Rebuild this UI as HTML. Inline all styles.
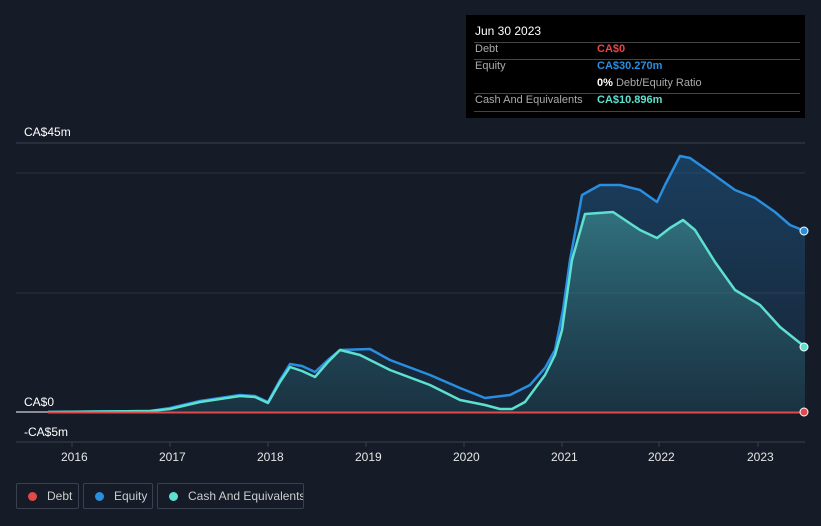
<!DOCTYPE html>
<html><head><meta charset="utf-8"><style>
body{margin:0;width:821px;height:526px;background:#151b27;font-family:"Liberation Sans",sans-serif;overflow:hidden;position:relative}
.t{position:absolute;color:#fff;font-size:12px}
.ax{position:absolute;color:#e6e6e6;font-size:12px;top:450px}
#tip{position:absolute;left:466px;top:15px;width:339px;height:103px;background:#000;font-size:11px}
#tip .r{position:absolute;left:8px;width:326px;border-top:1px solid #444}
.lg{position:absolute;top:483px;height:26px;border:1px solid #3a4050;border-radius:2px;color:#ccc;font-size:12px;line-height:24px;box-sizing:border-box;white-space:nowrap;overflow:hidden}
.dot{display:inline-block;width:9px;height:9px;border-radius:50%;margin:0 10px 0 11px;vertical-align:-1px}
</style></head><body>
<svg width="821" height="526" style="position:absolute;left:0;top:0">
<defs>
<linearGradient id="g1" x1="0" y1="0" x2="0" y2="1"><stop offset="0" stop-color="#1e5a8a" stop-opacity=".55"/><stop offset="1" stop-color="#1e5a8a" stop-opacity=".15"/></linearGradient>
<linearGradient id="g2" x1="0" y1="0" x2="0" y2="1"><stop offset="0" stop-color="#4fb8b0" stop-opacity=".45"/><stop offset="1" stop-color="#2a6a70" stop-opacity=".2"/></linearGradient>
</defs>
<line x1="16" y1="143" x2="805" y2="143" stroke="#3a404c"/>
<line x1="16" y1="173" x2="805" y2="173" stroke="#2c323e"/>
<line x1="16" y1="293" x2="805" y2="293" stroke="#2c323e"/>
<line x1="16" y1="442" x2="805" y2="442" stroke="#3a404c"/>
<g stroke="#3a404c"><line x1="72" y1="442" x2="72" y2="447"/><line x1="170" y1="442" x2="170" y2="447"/><line x1="268" y1="442" x2="268" y2="447"/><line x1="366" y1="442" x2="366" y2="447"/><line x1="464" y1="442" x2="464" y2="447"/><line x1="562" y1="442" x2="562" y2="447"/><line x1="659" y1="442" x2="659" y2="447"/><line x1="758" y1="442" x2="758" y2="447"/></g>
<polygon fill="url(#g1)" points="48,412 150,411 170,408 200,401 240,395 255,396 268,402 280,380 290,364 302,366 315,372 328,360 340,350 370,349 390,360 430,375 460,388 485,398 510,395 530,385 545,368 555,350 563,310 570,260 582,195 600,185 620,185 640,190 657,202 665,185 680,156 690,158 710,172 735,190 755,198 775,212 790,225 805,231 805,412"/>
<polygon fill="url(#g2)" points="48,412 150,411 170,409 200,402 240,396 255,397 268,403 280,382 290,367 302,371 315,377 328,362 340,350 360,355 390,370 430,385 460,400 485,405 500,409 512,409 525,402 545,375 555,355 562,330 572,260 585,214 613,212 640,230 657,238 670,228 683,220 695,230 715,262 735,290 760,305 780,327 805,347 805,412"/>
<line x1="16" y1="412" x2="48" y2="412" stroke="#fff" stroke-width="1"/>
<polyline fill="none" stroke="#2a8ede" stroke-width="2.5" stroke-linejoin="round" points="48,412 150,411 170,408 200,401 240,395 255,396 268,402 280,380 290,364 302,366 315,372 328,360 340,350 370,349 390,360 430,375 460,388 485,398 510,395 530,385 545,368 555,350 563,310 570,260 582,195 600,185 620,185 640,190 657,202 665,185 680,156 690,158 710,172 735,190 755,198 775,212 790,225 805,231"/>
<polyline fill="none" stroke="#5ee0d0" stroke-width="2.5" stroke-linejoin="round" points="48,412 150,411 170,409 200,402 240,396 255,397 268,403 280,382 290,367 302,371 315,377 328,362 340,350 360,355 390,370 430,385 460,400 485,405 500,409 512,409 525,402 545,375 555,355 562,330 572,260 585,214 613,212 640,230 657,238 670,228 683,220 695,230 715,262 735,290 760,305 780,327 805,347"/>
<line x1="48" y1="412.5" x2="805" y2="412.5" stroke="#e04a4a" stroke-width="2"/>
<circle cx="804" cy="231" r="4" fill="#2a8ede" stroke="#fff" stroke-width="1"/>
<circle cx="804" cy="347" r="4" fill="#5ee0d0" stroke="#fff" stroke-width="1"/>
<circle cx="804" cy="412" r="4" fill="#e04a4a" stroke="#fff" stroke-width="1"/>
</svg>
<div class="t" style="left:24px;top:125px">CA$45m</div>
<div class="t" style="left:24px;top:395px">CA$0</div>
<div class="t" style="left:24px;top:425px">-CA$5m</div>
<div class="ax" style="left:61px">2016</div><div class="ax" style="left:159px">2017</div><div class="ax" style="left:257px">2018</div><div class="ax" style="left:355px">2019</div><div class="ax" style="left:453px">2020</div><div class="ax" style="left:551px">2021</div><div class="ax" style="left:648px">2022</div><div class="ax" style="left:747px">2023</div>
<div id="tip">
<div style="position:absolute;left:9px;top:9px;color:#fff;font-size:12px">Jun 30 2023</div>
<div class="r" style="top:27px"></div>
<div style="position:absolute;left:9px;top:28px;color:#aaa">Debt</div><div style="position:absolute;left:131px;top:28px;color:#e84545;font-weight:bold">CA$0</div>
<div class="r" style="top:44px"></div>
<div style="position:absolute;left:9px;top:45px;color:#aaa">Equity</div><div style="position:absolute;left:131px;top:45px;color:#2a8ede;font-weight:bold">CA$30.270m</div>
<div style="position:absolute;left:131px;top:62px;color:#aaa"><b style="color:#fff">0%</b> Debt/Equity Ratio</div>
<div class="r" style="top:78px"></div>
<div style="position:absolute;left:9px;top:79px;color:#aaa">Cash And Equivalents</div><div style="position:absolute;left:131px;top:79px;color:#5ee0d0;font-weight:bold">CA$10.896m</div>
<div class="r" style="top:96px"></div>
</div>
<div class="lg" style="left:16px;width:63px"><span class="dot" style="background:#e04a4a"></span>Debt</div>
<div class="lg" style="left:83px;width:70px"><span class="dot" style="background:#2a8ede"></span>Equity</div>
<div class="lg" style="left:157px;width:147px"><span class="dot" style="background:#5ee0d0"></span>Cash And Equivalents</div>
</body></html>
